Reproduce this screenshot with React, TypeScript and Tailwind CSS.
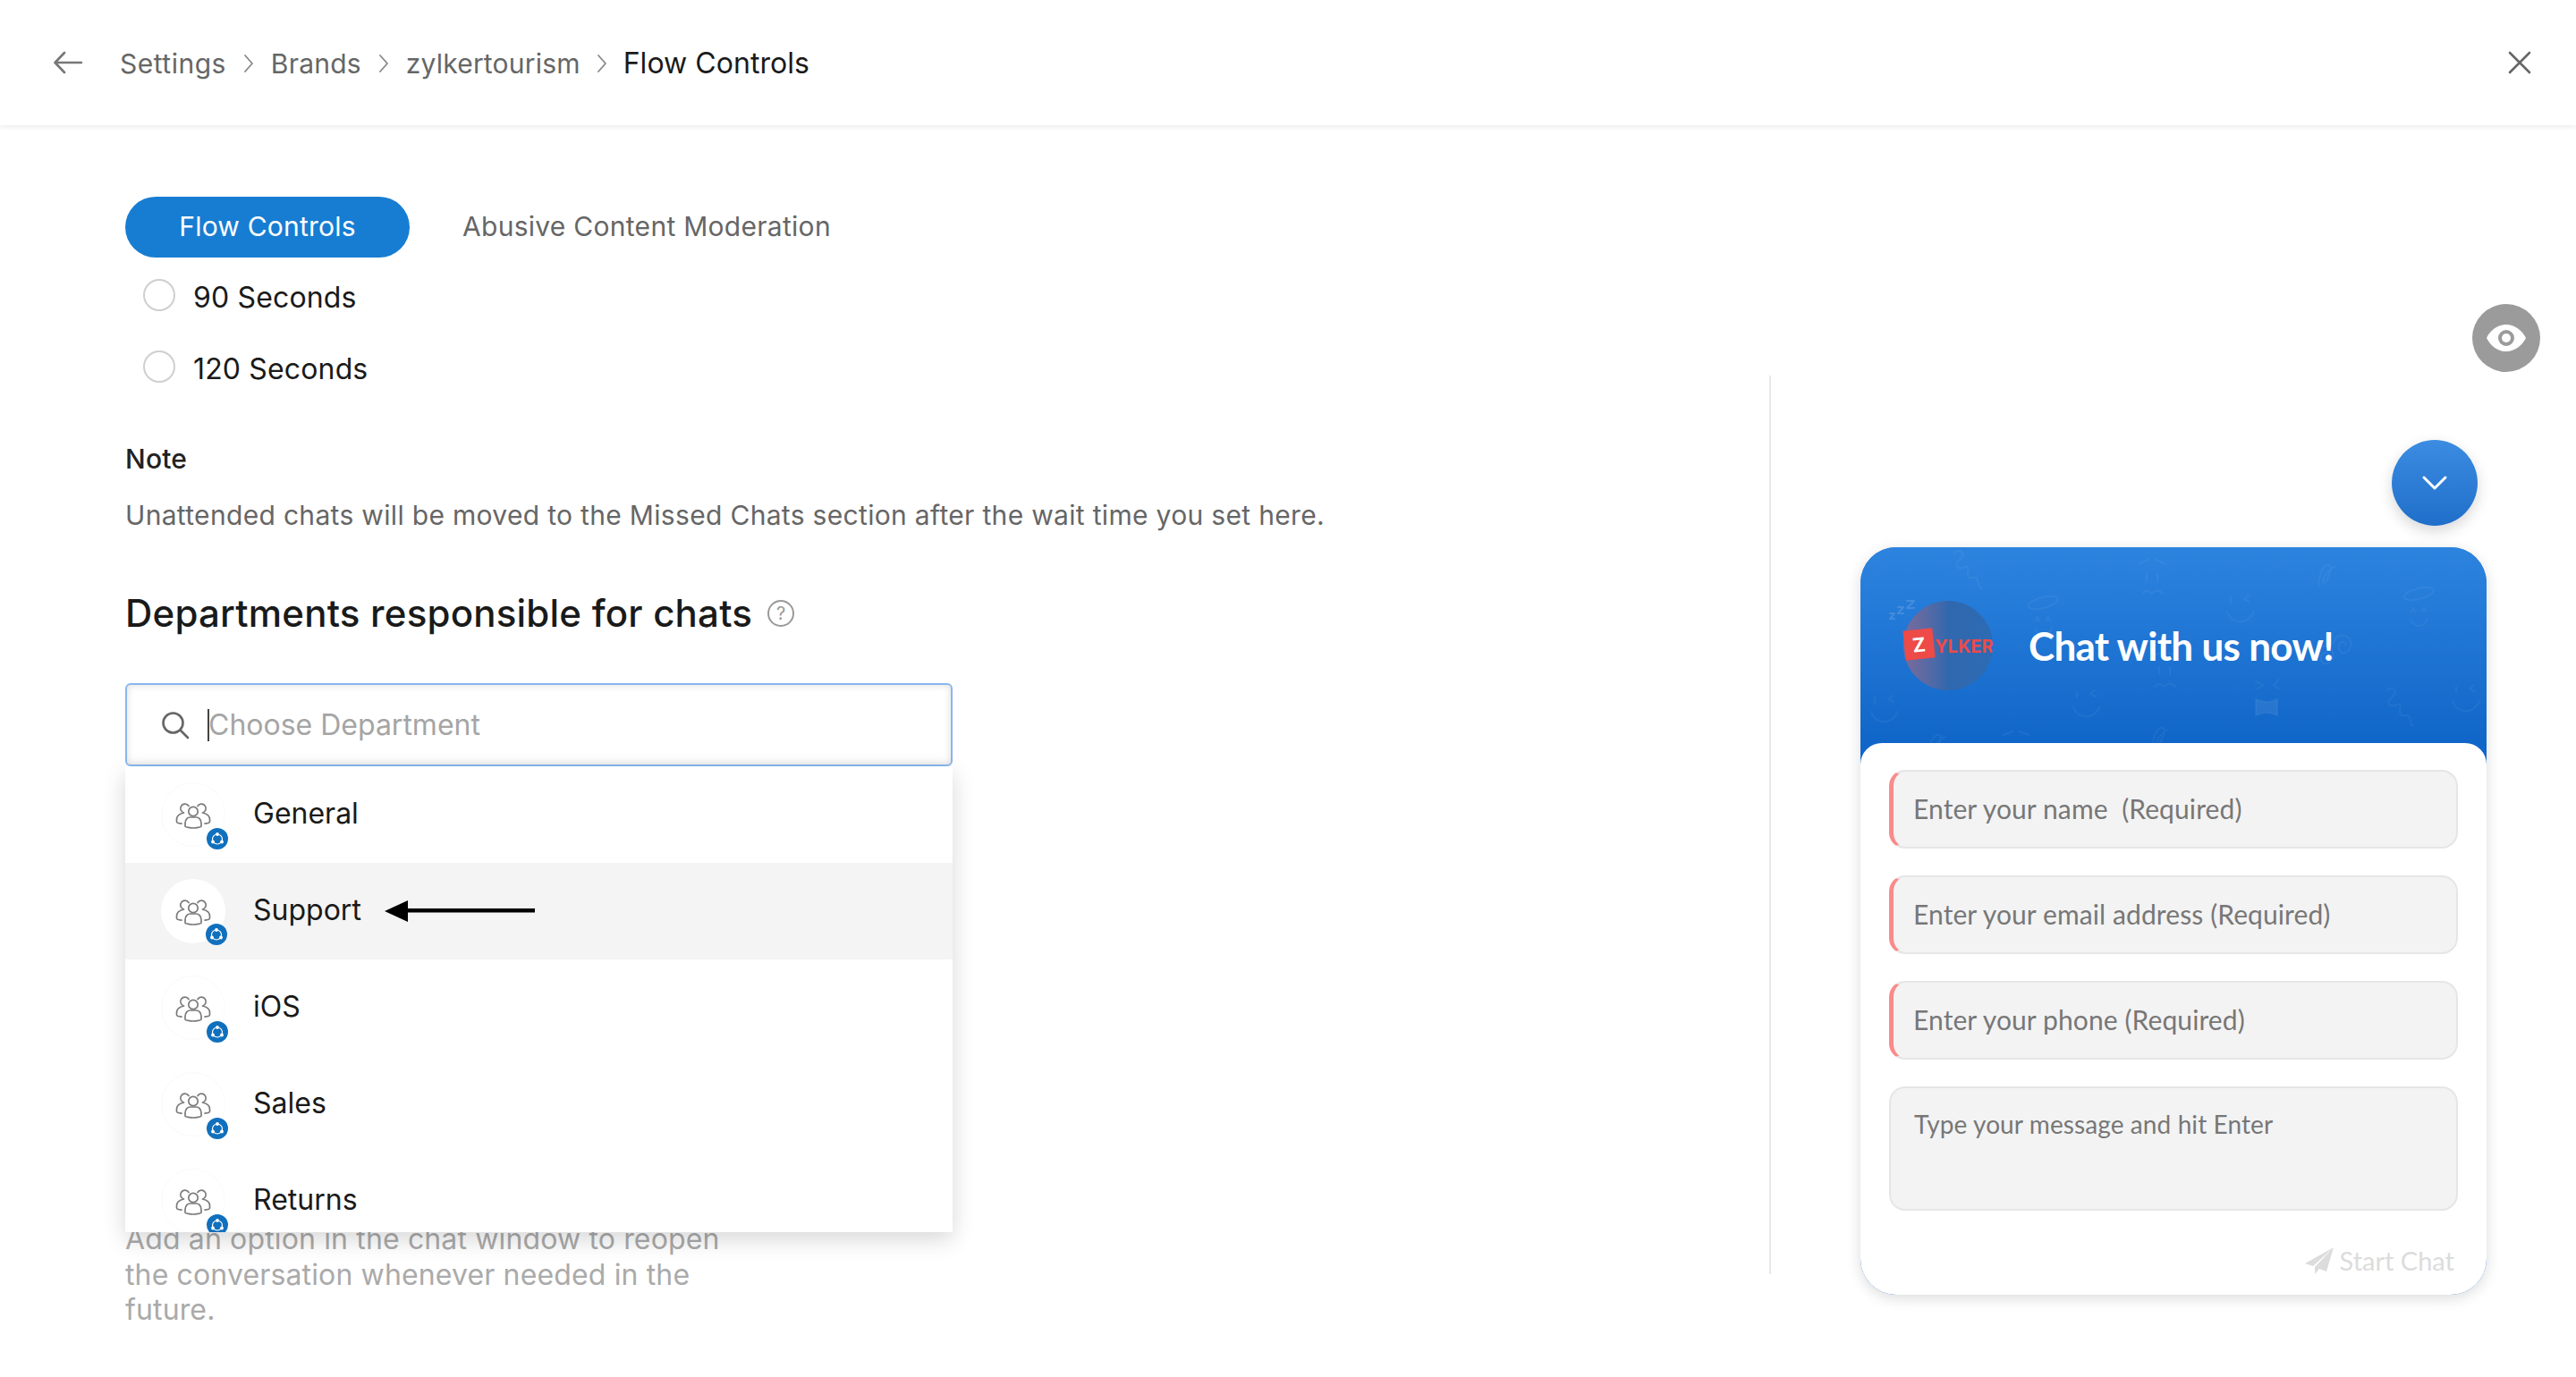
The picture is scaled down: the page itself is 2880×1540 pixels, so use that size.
import React from "react";

const GroupIcon = () => (
  <svg width="40" height="32" viewBox="0 0 40 32" fill="none" stroke="#7a7a7a" strokeWidth="1.700" strokeLinecap="round" strokeLinejoin="round">
    <circle cx="20" cy="12.500" r="5.200" />
    <path d="M11 29v-3.500c0-4.200 3.200-6.500 5.400-6.500h7.200c2.200 0 5.400 2.300 5.400 6.500V29c0 1-6 2-9 2s-9-1-9-2z" />
    <path d="M15 6.500a5 5 0 1 0-5.500 7.500C5 15 1.500 17.500 1.500 21.500V24c0 .8 2 1.800 5.500 2.200" />
    <path d="M25 6.500a5 5 0 1 1 5.500 7.500c4.500 1 8 3.500 8 7.500V24c0 .8-2 1.800-5.500 2.200" />
  </svg>
);

const Badge = () => (
  <span className="absolute left-[50px] top-[50px] flex h-[24px] w-[24px] items-center justify-center rounded-full bg-[#1170bd]">
    <svg width="20" height="20" viewBox="0 0 20 20" fill="none">
      <circle cx="10" cy="10.500" r="5.500" stroke="#fff" strokeWidth="1.200" />
      <circle cx="10" cy="5" r="1.900" fill="#fff" />
      <circle cx="5" cy="13.500" r="1.900" fill="#fff" />
      <circle cx="15" cy="13.500" r="1.900" fill="#fff" />
    </svg>
  </span>
);

const Row = ({ name, active, arrow }: { name: string; active?: boolean; arrow?: boolean }) => (
  <div className={`flex h-[108px] shrink-0 items-center pl-[40px] ${active ? "bg-[#f4f4f4]" : ""}`}>
    <div className={`relative flex h-[72px] w-[72px] shrink-0 items-center justify-center rounded-full ${active ? "bg-white" : "border border-[#fafafa] bg-white"}`}>
      <GroupIcon />
      <Badge />
    </div>
    <span className="ml-[31px] -translate-y-[1px] text-[32px] leading-[40px] text-[#1a1a1a]">{name}</span>
    {arrow && (
      <svg className="ml-[26px]" width="168" height="26" viewBox="0 0 168 26">
        <path d="M0 13 L26 1 V10 H168 V14.500 H26 V25 Z" fill="#000" />
      </svg>
    )}
  </div>
);

const Curl = () => <path d="M0 0c8-6 14 2 6 8s-2 12 6 8-2 14 8 12 4 10 10 12" />;
const Face = () => (
  <g>
    <path d="M0 0c4 14 22 16 30 0" />
    <path d="M4-16v6M24-18l-5 4 6 3" />
  </g>
);
const Halo = () => (
  <g>
    <ellipse cx="16" cy="0" rx="17" ry="6" transform="rotate(-14 16 0)" />
    <path d="M8 20l2-4 2 4M20 20l2-4 2 4M8 30c4 8 14 8 18-2" />
  </g>
);
const Sad = () => (
  <g>
    <path d="M0 0l10-4M18-4l10 4M8 12v8M20 12v8M4 34c4-8 8 2 12-2s8 0 10 2" />
  </g>
);
const Spiral = () => <path d="M12 12c3-3-3-6-6-2s0 12 6 10 9-10 4-16S0 0-1 10" />;
const Loop = () => <path d="M0 26c0-12 6-26 12-24s-4 20-6 20-2-10 12-18" />;
const Bow = () => (
  <g>
    <path d="M0 0c10 4 14 4 24 0v18c-10-4-14-4-24 0z" fill="#fff" fillOpacity="0.07" />
    <path d="M0-20l8 4-6 4M26-22l-6 6 6 4" />
  </g>
);

const Doodles = () => {
  const items: [React.ReactNode, number, number][] = [
    [<Curl />, 105, 6],
    [<Sad />, 312, 18],
    [<Loop />, 512, 18],
    [<Halo />, 188, 62],
    [<Face />, 410, 72],
    [<Halo />, 608, 52],
    [<Spiral />, 530, 98],
    [<Spiral />, 510, 110],
    [<Curl />, 588, 160],
    [<Face />, 662, 172],
    [<Bow />, 442, 170],
    [<Face />, 238, 178],
    [<Face />, 12, 184],
    [<Sad />, 326, 122],
    [<Loop />, 326, 200],
    [<Sad />, 160, 210],
    [<Loop />, 76, 208],
  ];
  return (
    <svg className="absolute left-0 top-0" width="700" height="220" viewBox="0 0 700 220" fill="none" stroke="#fff" strokeOpacity="0.05" strokeWidth="2" strokeLinecap="round">
      {items.map(([n, x, y], i) => (
        <g key={i} transform={`translate(${x} ${y})`}>{n}</g>
      ))}
    </svg>
  );
};

const Chevron = () => (
  <svg width="12" height="22" viewBox="0 0 12 22" fill="none" stroke="#888" strokeWidth="1.800" strokeLinecap="round" strokeLinejoin="round">
    <path d="M2 2l8 9-8 9" />
  </svg>
);

const Field = ({ text, className }: { text: string; className: string }) => (
  <div className={`flex w-full rounded-[18px] border-2 border-[#e6e6e6] bg-[#f3f3f3] leading-[36px] text-[#777] ${className}`}>
    {text}
  </div>
);

export default function App() {
  return (
    <div className="h-[1540px] w-full overflow-hidden bg-white font-['Inter',sans-serif]">
      <header className="relative z-10 flex h-[140px] items-center bg-white pl-[60px] pr-[50px] shadow-[0_2px_6px_rgba(0,0,0,0.08)]">
        <svg width="32" height="26" viewBox="0 0 32 26" fill="none" stroke="#777" strokeWidth="2.600" strokeLinecap="round" strokeLinejoin="round">
          <path d="M31 13H2M12 2L1.500 13 12 24" />
        </svg>
        <nav className="ml-[42px] mt-[2px] flex items-center text-[30px] leading-[44px] tracking-[0.2px] text-[#666]">
          <span className="tracking-[0.5px]">Settings</span>
          <span className="mx-[19px]"><Chevron /></span>
          <span>Brands</span>
          <span className="mx-[19px]"><Chevron /></span>
          <span>zylkertourism</span>
          <span className="mx-[18px]"><Chevron /></span>
          <span className="text-[32px] tracking-[0.05px] text-[#1a1a1a]">Flow Controls</span>
        </nav>
        <svg className="ml-auto" width="26" height="26" viewBox="0 0 26 26" fill="none" stroke="#666" strokeWidth="2.600" strokeLinecap="round">
          <path d="M2 2l22 22M24 2L2 24" />
        </svg>
      </header>

      <main className="flex h-[1400px]">
        <section className="w-[1978px] shrink-0 pl-[140px] pt-[80px]">
          <div className="flex items-center">
            <div className="flex h-[68px] w-[318px] items-center justify-center rounded-full bg-[#177dd2] pb-[1px] text-[30px] tracking-[0.2px] text-white">Flow Controls</div>
            <div className="ml-[59px] pb-[1px] text-[30px] tracking-[0.28px] text-[#666]">Abusive Content Moderation</div>
          </div>
          <div className="mt-[4px] pl-[20px]">
            {["90 Seconds", "120 Seconds"].map((t) => (
              <div key={t} className="flex h-[80px] items-center">
                <span className="h-[36px] w-[36px] -translate-y-[2px] rounded-full border-2 border-[#cfcfcf] bg-white" />
                <span className="ml-[20px] translate-y-[1px] text-[32px] leading-[40px] tracking-[0.15px] text-[#1a1a1a]">{t}</span>
              </div>
            ))}
          </div>
          <div className="mt-[41px] text-[30px] font-medium leading-[40px] tracking-[0.2px] text-[#222]">Note</div>
          <div className="mt-[23px] text-[30px] leading-[40px] tracking-[0.32px] text-[#666]">Unattended chats will be moved to the Missed Chats section after the wait time you set here.</div>
          <div className="mt-[62px] flex h-[56px] items-center">
            <h2 className="text-[42px] font-medium leading-[56px] tracking-[0.22px] text-[#1a1a1a]">Departments responsible for chats</h2>
            <span className="ml-[17px] flex h-[30px] w-[30px] items-center justify-center rounded-full border-2 border-[#999] text-[20px] leading-none text-[#999]">?</span>
          </div>
          <div className="relative mt-[50px] w-[925px]">
            <div className="flex h-[93px] items-center rounded-[6px] border-2 border-[#8ab6ee] bg-white pl-[38px] shadow-[inset_0_0_8px_rgba(0,0,0,0.14)]">
              <svg width="32" height="32" viewBox="0 0 32 32" fill="none" stroke="#666" strokeWidth="2.600" strokeLinecap="round">
                <circle cx="13.500" cy="13.500" r="11" />
                <path d="M22 22l8 8" />
              </svg>
              <span className="ml-[20px] h-[36px] w-[2px] bg-[#444]" />
              <span className="-ml-[1px] text-[32px] leading-[40px] text-[#a5a5a5]">Choose Department</span>
            </div>
            <div className="absolute left-0 top-full z-20 flex h-[521px] w-full flex-col overflow-hidden bg-white shadow-[0_8px_24px_rgba(0,0,0,0.16)]">
              <Row name="General" />
              <Row name="Support" active arrow />
              <Row name="iOS" />
              <Row name="Sales" />
              <Row name="Returns" />
            </div>
          </div>
          <p className="mt-[509px] w-[680px] text-[32px] leading-[39.6px] tracking-[0.14px] text-[#aaa]">
            Add an option in the chat window to reopen the conversation whenever needed in the future.
          </p>
        </section>

        <div className="mt-[280px] h-[1005px] w-[2px] shrink-0 bg-[#e8e8e8]" />

        <aside className="flex flex-1 flex-col items-end pt-[200px]">
          <div className="mr-[40px] flex h-[76px] w-[76px] items-center justify-center rounded-full bg-[#9b9b9b]">
            <svg width="44" height="30" viewBox="0 0 44 30">
              <path fillRule="evenodd" fill="#fff" d="M22 0c10 0 18 7 22 15-4 8-12 15-22 15S4 23 0 15C4 7 12 0 22 0zm0 6a9 9 0 1 0 0 18 9 9 0 0 0 0-18z" />
              <circle cx="22" cy="15" r="5" fill="#fff" />
            </svg>
          </div>
          <div className="mr-[110px] mt-[76px] flex h-[96px] w-[96px] items-center justify-center rounded-full bg-gradient-to-b from-[#3c8ce2] to-[#1f6ec9] shadow-[0_6px_16px_rgba(0,0,0,0.16)]">
            <svg width="30" height="18" viewBox="0 0 30 18" fill="none" stroke="#fff" strokeWidth="3" strokeLinecap="round" strokeLinejoin="round">
              <path d="M3 3l12 12L27 3" />
            </svg>
          </div>
          <div className="mr-[100px] mt-[24px] flex h-[836px] w-[700px] flex-col rounded-[40px] bg-[#1066c8] font-['Lato',sans-serif] shadow-[0_4px_16px_rgba(0,0,0,0.14)]">
            <div className="relative flex h-[219px] shrink-0 items-center overflow-hidden rounded-t-[40px] bg-gradient-to-b from-[#2d84df] to-[#1066c8] pl-[48px]">
              <Doodles />
              <svg className="absolute left-[32px] top-[58px]" width="30" height="24" viewBox="0 0 30 24" fill="none" stroke="#fff" strokeOpacity="0.14" strokeWidth="2" strokeLinecap="round" strokeLinejoin="round">
                <path d="M1 16h5l-5 6h5M10 9h6l-6 7h6M20 2h8l-8 8h8" />
              </svg>
              <div className="relative h-[100px] w-[100px] shrink-0">
                <div className="absolute inset-0 overflow-hidden rounded-full bg-gradient-to-r from-[#7a6a9a] via-[#3068ae] to-[#2c6bb4]">
                  <span className="absolute left-[35px] top-[36px] font-['Inter',sans-serif] text-[20px] font-bold leading-[30px] text-[#ee4a47]">YLKER</span>
                </div>
                <div className="absolute left-[1px] top-[32px] flex h-[33px] w-[33px] -rotate-6 items-center justify-center bg-[#ee4a47] font-['Inter',sans-serif] text-[22px] font-bold leading-none text-white">Z</div>
              </div>
              <span className="relative ml-[40px] whitespace-nowrap text-[44px] font-bold leading-[56px] tracking-[-0.7px] text-white">Chat with us now!</span>
            </div>
            <div className="flex flex-1 flex-col rounded-[40px] rounded-t-[24px] bg-white px-[32px] pt-[30px]">
              <Field text="Enter your name  (Required)" className="h-[88px] items-center whitespace-pre border-l-[5px] border-l-[#f98b8b] pb-[2px] pl-[22px] text-[30px] tracking-[0.1px]" />
              <Field text="Enter your email address (Required)" className="mt-[30px] h-[88px] items-center border-l-[5px] border-l-[#f98b8b] pb-[2px] pl-[22px] text-[30px] tracking-[0.1px]" />
              <Field text="Enter your phone (Required)" className="mt-[30px] h-[88px] items-center border-l-[5px] border-l-[#f98b8b] pb-[2px] pl-[22px] text-[30px] tracking-[0.1px]" />
              <Field text="Type your message and hit Enter" className="mt-[30px] h-[139px] items-start pl-[26px] pt-[22px] text-[28px] tracking-[0.1px]" />
              <div className="mr-[4px] mt-[38px] flex items-center justify-end text-[29px] leading-[36px] text-[#dcdcdc]">
                <svg width="32" height="30" viewBox="0 0 32 30" fill="#dcdcdc">
                  <path d="M32 0L0 18l9 3zM32 0L11 22v8l5-6 8 3z" />
                </svg>
                <span className="ml-[7px]">Start Chat</span>
              </div>
            </div>
          </div>
        </aside>
      </main>
    </div>
  );
}
